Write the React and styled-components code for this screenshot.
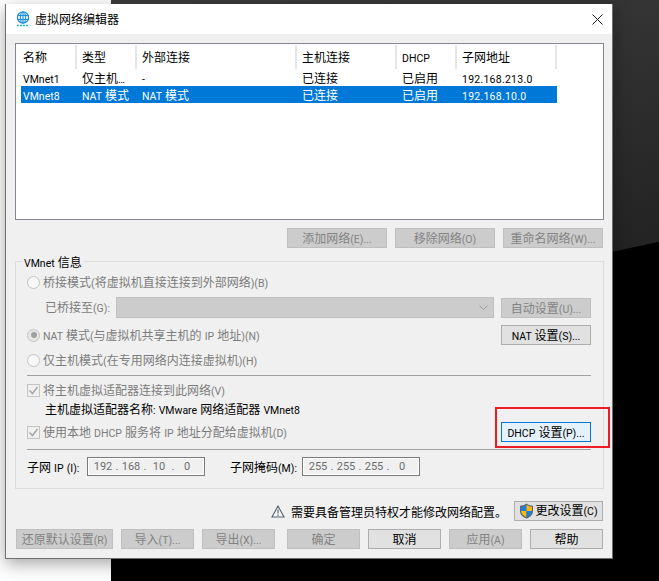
import React from 'react';
import styled, { createGlobalStyle } from 'styled-components';

const GlobalStyle = createGlobalStyle`
  html, body {
    margin: 0;
    padding: 0;
    background: #000;
  }
  * {
    box-sizing: border-box;
  }
`;

const columns = [
  { title: '名称', width: 56 },
  { title: '类型', width: 60 },
  { title: '外部连接', width: 160 },
  { title: '主机连接', width: 100 },
  { title: 'DHCP', width: 60 },
  { title: '子网地址', width: 100 },
];

const networks = [
  { id: 1, cells: ['VMnet1', '仅主机…', '-', '已连接', '已启用', '192.168.213.0'] },
  { id: 8, selected: true, cells: ['VMnet8', 'NAT 模式', 'NAT 模式', '已连接', '已启用', '192.168.10.0'] },
];

// latin runs are smaller and narrower than the CJK around them in the original UI font
const Mixed = ({ children }) =>
  children.split(/([\x20-\x7e\u2026]+)/).map((run, i) =>
    i % 2 ? <Latin key={i}>{run}</Latin> : run
  );

const GlobeIcon = () => (
  <svg width="14" height="16" viewBox="0 0 14 16" fill="none">
    <circle cx="7" cy="6.5" r="5.6" stroke="#1f8fd8" strokeWidth="1.2" fill="#dff1fb" />
    <ellipse cx="7" cy="6.5" rx="2.6" ry="5.6" stroke="#1f8fd8" />
    <path d="M1.4 4.5h11.2M1.4 8.5h11.2M7 1v11" stroke="#1f8fd8" />
    <path d="M1 14.5h12" stroke="#19c2a8" strokeWidth="1.4" strokeDasharray="2 1" />
  </svg>
);

const CloseIcon = () => (
  <svg width="11" height="11" viewBox="0 0 11 11">
    <path d="M.5.5l10 10M10.5.5l-10 10" stroke="#1a1a1a" fill="none" />
  </svg>
);

const ChevronIcon = () => (
  <svg width="9" height="6" viewBox="0 0 9 6">
    <path d="M.5.5l4 4 4-4" stroke="#9d9d9d" fill="none" />
  </svg>
);

const CheckIcon = () => (
  <svg width="11" height="11" viewBox="0 0 11 11">
    <path d="M1.5 5.5l3 3 5-6.5" stroke="#a8a8a8" strokeWidth="1.5" fill="none" />
  </svg>
);

const WarningIcon = () => (
  <svg width="14" height="13" viewBox="0 0 14 13">
    <path d="M7 1l6 11H1z" stroke="#56626e" strokeWidth="1.1" fill="#f6f6f6" />
    <path d="M7 4.5v4M7 9.5V11" stroke="#3d4650" />
  </svg>
);

const ShieldIcon = () => (
  <svg width="15" height="16" viewBox="0 0 15 16">
    <path d="M7.5.5C5.5 2 3.3 2.6 1 2.8v5.4c0 3.3 2.6 5.8 6.5 7.3 3.9-1.5 6.5-4 6.5-7.3V2.8C11.7 2.6 9.5 2 7.5.5z" fill="#5b6470" />
    <path d="M7.5 1.7C5.7 3 3.8 3.5 2 3.7V8h5.5z" fill="#1e7fd6" />
    <path d="M7.5 1.7C9.3 3 11.2 3.5 13 3.7V8H7.5z" fill="#f7b917" />
    <path d="M2 8h5.5v6.3C4.5 13 2.2 11 2 8z" fill="#f7b917" />
    <path d="M13 8H7.5v6.3c3-1.3 5.3-3.3 5.5-6.3z" fill="#1e7fd6" />
  </svg>
);

const IpField = ({ width, parts }) => (
  <IpBox $width={width}>
    {parts.map((part, i) => (
      <React.Fragment key={i}>
        {i > 0 && <IpDot>.</IpDot>}
        <IpPart>{part}</IpPart>
      </React.Fragment>
    ))}
  </IpBox>
);

const App = () => (
  <Desktop>
    <GlobalStyle />
    <LightPanel />
    <Window>
      <TitleBar>
        <TitleLeft>
          <GlobeIcon />
          <Label>虚拟网络编辑器</Label>
        </TitleLeft>
        <CloseIcon />
      </TitleBar>
      <Body>
        <ListBox>
          <HeaderRow>
            {columns.map(col => (
              <HeaderCell key={col.title} $width={col.width}>
                <Label><Mixed>{col.title}</Mixed></Label>
              </HeaderCell>
            ))}
          </HeaderRow>
          {networks.map(net => (
            <Row key={net.id} $selected={net.selected}>
              {net.cells.map((cell, i) => (
                <Cell key={i} $width={columns[i].width} $spaced={i === 5}><Mixed>{cell}</Mixed></Cell>
              ))}
            </Row>
          ))}
        </ListBox>

        <ListActions>
          <Button disabled $width={100}><Mixed>添加网络(E)...</Mixed></Button>
          <Button disabled $width={100}><Mixed>移除网络(O)</Mixed></Button>
          <Button disabled $width={100}><Mixed>重命名网络(W)...</Mixed></Button>
        </ListActions>

        <Group>
          <Legend><Mixed>VMnet 信息</Mixed></Legend>
          <OptionRow $top={0}>
            <Radio />
            <Label><Mixed>桥接模式(将虚拟机直接连接到外部网络)(B)</Mixed></Label>
          </OptionRow>
          <BridgeRow>
            <BridgeLabel><Label><Mixed>已桥接至(G):</Mixed></Label></BridgeLabel>
            <Select><ChevronIcon /></Select>
            <Button disabled $width={90}><Mixed>自动设置(U)...</Mixed></Button>
          </BridgeRow>
          <NatRow>
            <Option>
              <Radio $checked />
              <Label><Mixed>NAT 模式(与虚拟机共享主机的 IP 地址)(N)</Mixed></Label>
            </Option>
            <Button $width={90}><Mixed>NAT 设置(S)...</Mixed></Button>
          </NatRow>
          <OptionRow $top={7}>
            <Radio />
            <Label><Mixed>仅主机模式(在专用网络内连接虚拟机)(H)</Mixed></Label>
          </OptionRow>
          <Divider $top={7} />
          <OptionRow $top={6}>
            <Checkbox><CheckIcon /></Checkbox>
            <Label><Mixed>将主机虚拟适配器连接到此网络(V)</Mixed></Label>
          </OptionRow>
          <AdapterName><Mixed>主机虚拟适配器名称: VMware 网络适配器 VMnet8</Mixed></AdapterName>
          <DhcpRow>
            <Option>
              <Checkbox><CheckIcon /></Checkbox>
              <Label><Mixed>使用本地 DHCP 服务将 IP 地址分配给虚拟机(D)</Mixed></Label>
            </Option>
            <Highlighted>
              <Button $width={90} $focused><Mixed>DHCP 设置(P)...</Mixed></Button>
            </Highlighted>
          </DhcpRow>
          <Divider $top={7} />
          <SubnetRow>
            <SubnetLabel $width={60}><Mixed>子网 IP (I):</Mixed></SubnetLabel>
            <IpField width={118} parts={['192', '168', '10', '0']} />
            <SubnetLabel $width={72} $left={25}><Mixed>子网掩码(M):</Mixed></SubnetLabel>
            <IpField width={118} parts={['255', '255', '255', '0']} />
          </SubnetRow>
        </Group>

        <Notice>
          <WarningIcon />
          <NoticeText>需要具备管理员特权才能修改网络配置。</NoticeText>
          <ChangeButton><ShieldIcon /><span><Mixed>更改设置(C)</Mixed></span></ChangeButton>
        </Notice>

        <Footer>
          <ButtonGroup>
            <Button disabled $width={97}><Mixed>还原默认设置(R)</Mixed></Button>
            <Button disabled $width={73}><Mixed>导入(T)...</Mixed></Button>
            <Button disabled $width={73}><Mixed>导出(X)...</Mixed></Button>
          </ButtonGroup>
          <ButtonGroup>
            <Button disabled $width={73}>确定</Button>
            <Button $width={73}>取消</Button>
            <Button disabled $width={73}><Mixed>应用(A)</Mixed></Button>
            <Button $width={73}>帮助</Button>
          </ButtonGroup>
        </Footer>
      </Body>
    </Window>
  </Desktop>
);

const Latin = styled.span`
  font-family: Roboto, "Liberation Sans", sans-serif;
  font-size: 10.5px;
  word-spacing: 0.5px;
`;

const Label = styled.span`
  position: relative;
  top: -1px;
`;

const Desktop = styled.div`
  position: relative;
  width: 659px;
  height: 581px;
  overflow: hidden;
  padding-left: 111px;
  background:
    linear-gradient(168deg, #3c3c3c 0, #2b2b2b 240px, #232323 350px, #000 351px) 111px 0 / 548px 581px no-repeat,
    #000;
  font-family: "Noto Sans CJK SC", sans-serif;
  font-size: 12px;
  color: #000;
`;

const LightPanel = styled.div`
  position: absolute;
  left: 0;
  top: 0;
  bottom: 0;
  width: 111px;
  background: #fff;
`;

const Window = styled.div`
  position: absolute;
  left: 5px;
  top: 4px;
  width: 608px;
  height: 555px;
  display: flex;
  flex-direction: column;
  background: #f0f0f0;
  border: 1px solid #6f6f6f;
  border-top: none;
  box-shadow: 0 5px 16px rgba(0, 0, 0, 0.35);
`;

const TitleBar = styled.div`
  height: 30px;
  flex: none;
  background: #fff;
  display: flex;
  align-items: center;
  justify-content: space-between;
  padding: 0 9px 0 10px;
`;

const TitleLeft = styled.div`
  display: flex;
  align-items: center;
  gap: 5px;
`;

const Body = styled.div`
  flex: 1;
  display: flex;
  flex-direction: column;
  padding: 9px 8px 0 9px;
`;

const ListBox = styled.div`
  height: 177px;
  flex: none;
  background: #fff;
  border: 1px solid #828790;
  padding: 1px 0 0 5px;
`;

const HeaderRow = styled.div`
  display: flex;
  height: 24px;
`;

const HeaderCell = styled.div`
  width: ${p => p.$width}px;
  flex: none;
  display: flex;
  align-items: center;
  padding-left: 5px;
  border-right: 2px solid #e5e5e5;
  &:first-child {
    padding-left: 2px;
  }
`;

const Row = styled.div`
  display: flex;
  width: 536px;
  height: 17px;
  background: ${p => (p.$selected ? '#0078d7' : 'transparent')};
  color: ${p => (p.$selected ? '#fff' : '#000')};
`;

const Cell = styled.div`
  width: ${p => p.$width}px;
  flex: none;
  padding-left: 5px;
  line-height: 17px;
  white-space: nowrap;
  overflow: hidden;
  letter-spacing: ${p => (p.$spaced ? '0.25px' : '0')};
  &:first-child {
    padding-left: 2px;
  }
`;

const ListActions = styled.div`
  display: flex;
  justify-content: flex-end;
  gap: 8px;
  margin-top: 8px;
  padding-right: 1px;
`;

const Button = styled.button`
  width: ${p => p.$width}px;
  height: 20px;
  flex: none;
  padding: 0;
  font: inherit;
  line-height: 18px;
  white-space: nowrap;
  color: #000;
  background: ${p => (p.$focused ? '#e5f1fb' : '#e1e1e1')};
  border: 1px solid ${p => (p.$focused ? '#0078d7' : '#adadad')};

  &:disabled {
    color: #838383;
    background: #cccccc;
    border-color: #bfbfbf;
  }
`;

const Group = styled.div`
  position: relative;
  height: 228px;
  flex: none;
  margin-top: 13px;
  padding: 12px 12px 0 11px;
  border: 1px solid #dcdcdc;
  color: #7c7c7c;
`;

const Legend = styled.span`
  position: absolute;
  left: 6px;
  top: -9px;
  padding: 0 2px;
  line-height: 17px;
  background: #f0f0f0;
  color: #000;
`;

const Option = styled.div`
  display: flex;
  align-items: center;
  gap: 3px;
`;

const OptionRow = styled(Option)`
  height: 16px;
  margin-top: ${p => p.$top}px;
`;

const Radio = styled.span`
  position: relative;
  width: 13px;
  height: 13px;
  flex: none;
  border: 1px solid #c4c4c4;
  border-radius: 50%;
  background: ${p => (p.$checked ? '#e6e6e6' : '#f8f8f8')};

  &::after {
    content: "";
    display: ${p => (p.$checked ? 'block' : 'none')};
    position: absolute;
    left: 2.5px;
    top: 2.5px;
    width: 6px;
    height: 6px;
    border-radius: 50%;
    background: #a0a0a0;
  }
`;

const Checkbox = styled.span`
  width: 13px;
  height: 13px;
  flex: none;
  display: flex;
  align-items: center;
  justify-content: center;
  border: 1px solid #c4c4c4;
  background: #f0f0f0;
`;

const BridgeRow = styled.div`
  display: flex;
  align-items: center;
  height: 21px;
  margin-top: 7px;
`;

const BridgeLabel = styled.span`
  width: 89px;
  flex: none;
  padding-left: 18px;
`;

const Select = styled.div`
  width: 378px;
  height: 21px;
  flex: none;
  margin-right: 7px;
  display: flex;
  align-items: center;
  justify-content: flex-end;
  padding-right: 5px;
  background: #cccccc;
  border: 1px solid #bfbfbf;
`;

const NatRow = styled.div`
  display: flex;
  align-items: center;
  justify-content: space-between;
  height: 20px;
  margin-top: 7px;
`;

const Divider = styled.div`
  height: 1px;
  margin-top: ${p => p.$top}px;
  background: #a0a0a0;
`;

const AdapterName = styled.div`
  height: 16px;
  margin-top: 3px;
  padding-left: 18px;
  line-height: 16px;
  color: #000;
`;

const DhcpRow = styled(NatRow)`
  margin-top: 5px;
`;

const Highlighted = styled.div`
  position: relative;
  height: 20px;

  &::after {
    content: "";
    position: absolute;
    left: -6px;
    top: -15px;
    width: 115px;
    height: 41px;
    box-sizing: border-box;
    border: 2px solid #ed1c24;
    pointer-events: none;
  }
`;

const SubnetRow = styled.div`
  display: flex;
  align-items: center;
  height: 19px;
  margin-top: 7px;
  color: #000;
`;

const SubnetLabel = styled.span`
  width: ${p => p.$width}px;
  flex: none;
  margin-left: ${p => p.$left || 0}px;
  white-space: nowrap;
`;

const IpBox = styled.div`
  width: ${p => p.$width}px;
  height: 19px;
  flex: none;
  display: flex;
  align-items: center;
  padding-left: 3px;
  color: #6d6d6d;
  background: #f0f0f0;
  border: 1px solid #7a7a7a;
  box-shadow: inset 0 0 0 1px #fff;
  font-family: Roboto, sans-serif;
  font-size: 11px;
`;

const IpPart = styled.span`
  width: 24px;
  text-align: center;
`;

const IpDot = styled.span`
  width: 4px;
  text-align: center;
`;

const Notice = styled.div`
  display: flex;
  align-items: center;
  justify-content: flex-end;
  height: 20px;
  margin-top: 12px;
  padding-right: 1px;
`;

const NoticeText = styled.span`
  margin: 0 7px 0 6px;
`;

const ChangeButton = styled(Button)`
  width: 89px;
  display: flex;
  align-items: center;
  justify-content: center;
  gap: 1px;
`;

const Footer = styled.div`
  display: flex;
  justify-content: space-between;
  margin-top: 8px;
  padding: 0 1px;
`;

const ButtonGroup = styled.div`
  display: flex;
  gap: 8px;
`;

export default App;
